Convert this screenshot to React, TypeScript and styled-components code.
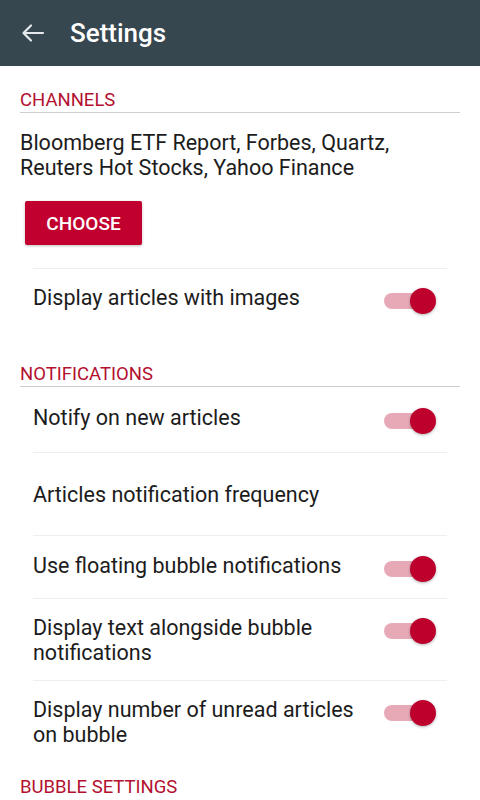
import React from "react";
import styled, { createGlobalStyle } from "styled-components";

const GlobalStyle = createGlobalStyle`
  body {
    margin: 0;
    background: #ffffff;
    font-family: Roboto, "Liberation Sans", sans-serif;
    color: #212121;
  }
`;

const Page = styled.div`
  width: 480px;
  height: 800px;
  overflow: hidden;
`;

const Toolbar = styled.div`
  display: flex;
  align-items: center;
  height: 66px;
  padding-left: 20px;
  gap: 24px;
  background: #37474f;
  color: #ffffff;
`;

const Title = styled.h1`
  margin: 0;
  font-size: 26px;
  font-weight: 500;
`;

const Content = styled.div`
  padding: 0 20px;
`;

const SectionHeader = styled.div<{ $top: number; $line?: boolean }>`
  padding-top: ${(p) => p.$top}px;
  padding-bottom: 2px;
  border-bottom: ${(p) => (p.$line === false ? "none" : "1px solid #cfcfcf")};
  font-size: 18.5px;
  line-height: 20px;
  color: #b3102f;
`;

const Summary = styled.p`
  margin: 17px 0 0;
  font-size: 21.5px;
  line-height: 25px;
  color: #1c1c1c;
`;

const ChooseButton = styled.button`
  margin: 21px 0 0 5px;
  width: 117px;
  height: 44px;
  border: none;
  border-radius: 2px;
  background: #c1002f;
  color: #ffffff;
  font-family: Roboto, "Liberation Sans", sans-serif;
  font-size: 19px;
  font-weight: 500;
  box-shadow: 0 1px 3px rgba(0, 0, 0, 0.25);
`;

const List = styled.div<{ $top: number }>`
  margin: ${(p) => p.$top}px 13px 0;
`;

const Row = styled.div<{ $height: number; $divider: boolean }>`
  display: flex;
  align-items: center;
  min-height: ${(p) => p.$height}px;
  border-top: ${(p) => (p.$divider ? "1px solid #efefef" : "none")};
`;

const RowInner = styled.div`
  flex: 1;
  display: flex;
  align-items: flex-start;
  justify-content: space-between;
`;

const RowLabel = styled.span`
  font-size: 21.5px;
  line-height: 25px;
  color: #1c1c1c;
  max-width: 340px;
`;

const SwitchWrap = styled.div`
  position: relative;
  width: 52px;
  height: 26px;
  margin: 3px 11px 0 0;
  flex-shrink: 0;
`;

const Track = styled.div`
  position: absolute;
  left: 0;
  top: 5px;
  width: 46px;
  height: 16px;
  border-radius: 8px;
  background: #e8a9b7;
`;

const Thumb = styled.div`
  position: absolute;
  right: 0;
  top: 0;
  width: 26px;
  height: 26px;
  border-radius: 50%;
  background: #bd002c;
  box-shadow: 0 1px 3px rgba(0, 0, 0, 0.3);
`;

function BackArrow() {
  return (
    <svg width="26" height="20" viewBox="0 0 26 20" fill="none">
      <path
        d="M23 10H4M11 2.5L3.5 10L11 17.5"
        stroke="#e6e9eb"
        strokeWidth="2.2"
        strokeLinecap="round"
        strokeLinejoin="round"
      />
    </svg>
  );
}

function Switch() {
  return (
    <SwitchWrap>
      <Track />
      <Thumb />
    </SwitchWrap>
  );
}

type Pref = { label: string; toggle: boolean; height: number };

const notifications: Pref[] = [
  { label: "Notify on new articles", toggle: true, height: 65 },
  { label: "Articles notification frequency", toggle: false, height: 82 },
  { label: "Use floating bubble notifications", toggle: true, height: 62 },
  { label: "Display text alongside bubble notifications", toggle: true, height: 81 },
  { label: "Display number of unread articles on bubble", toggle: true, height: 81 },
];

function PrefRow({ pref, divider }: { pref: Pref; divider: boolean }) {
  return (
    <Row $height={pref.height} $divider={divider}>
      <RowInner>
        <RowLabel>{pref.label}</RowLabel>
        {pref.toggle && <Switch />}
      </RowInner>
    </Row>
  );
}

export default function App() {
  return (
    <Page>
      <GlobalStyle />
      <Toolbar>
        <BackArrow />
        <Title>Settings</Title>
      </Toolbar>
      <Content>
        <SectionHeader $top={24}>CHANNELS</SectionHeader>
        <Summary>
          Bloomberg ETF Report, Forbes, Quartz, Reuters Hot Stocks, Yahoo Finance
        </Summary>
        <ChooseButton>CHOOSE</ChooseButton>
        <List $top={23}>
          <PrefRow
            pref={{ label: "Display articles with images", toggle: true, height: 60 }}
            divider
          />
        </List>
        <SectionHeader $top={35}>NOTIFICATIONS</SectionHeader>
        <List $top={0}>
          {notifications.map((n, i) => (
            <PrefRow key={n.label} pref={n} divider={i > 0} />
          ))}
        </List>
        <SectionHeader $top={15} $line={false}>
          BUBBLE SETTINGS
        </SectionHeader>
      </Content>
    </Page>
  );
}
